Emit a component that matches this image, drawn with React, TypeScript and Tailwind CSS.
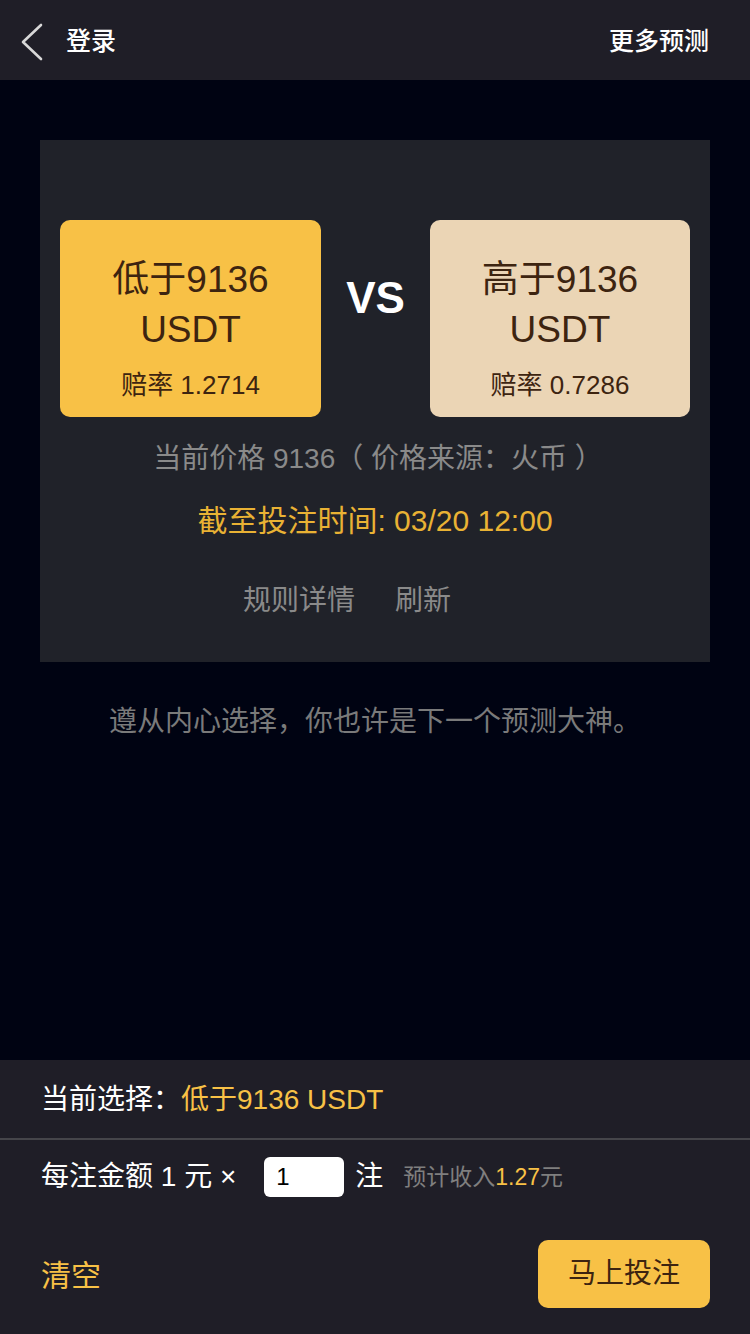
const font = { fontFamily: '"Liberation Sans", "Noto Sans CJK SC", sans-serif' };

function BackIcon() {
  return (
    <svg width="28" height="38" viewBox="0 0 28 38" fill="none">
      <polyline points="25,2 7,19 25,36" stroke="#d8d8d8" strokeWidth="2.6" strokeLinecap="round" strokeLinejoin="round" />
    </svg>
  );
}

export default function App() {
  return (
    <div className="flex flex-col w-[750px] h-[1334px] bg-[#000312] overflow-hidden" style={font}>
      <div className="flex h-[80px] items-center justify-between bg-[#1f1e27] pl-[16px] pr-[41px] pt-[3px] shrink-0">
        <div className="flex items-center gap-[22px]">
          <BackIcon />
          <span className="text-[25px] font-medium text-white">登录</span>
        </div>
        <span className="text-[25px] font-medium text-white">更多预测</span>
      </div>

      <div className="flex-1 flex flex-col items-center pt-[60px]">
        <div className="w-[670px] h-[522px] bg-[#202229] flex flex-col items-center pt-[80px]">
          <div className="flex w-full px-5 items-center justify-between">
            <div className="w-[261px] h-[197px] rounded-[10px] bg-[#f8c146] flex flex-col items-center justify-center pt-[22px] text-[#3d2410]">
              <span className="text-[37px] leading-[50px]">低于9136</span>
              <span className="text-[37px] leading-[50px]">USDT</span>
              <span className="text-[26px] leading-[40px] mt-[10px]">赔率 1.2714</span>
            </div>
            <span className="text-[44px] font-bold text-white mb-[42px]">VS</span>
            <div className="w-[260px] h-[197px] rounded-[10px] bg-[#ebd5b5] flex flex-col items-center justify-center pt-[22px] text-[#3d2410]">
              <span className="text-[37px] leading-[50px]">高于9136</span>
              <span className="text-[37px] leading-[50px]">USDT</span>
              <span className="text-[26px] leading-[40px] mt-[10px]">赔率 0.7286</span>
            </div>
          </div>
          <p className="mt-[22px] text-[28px] leading-[40px] text-[#8a8a8a] pl-[6px]">当前价格 9136（ 价格来源：火币 ）</p>
          <p className="mt-[22px] text-[30px] leading-[40px] text-[#e9b234]">截至投注时间: 03/20 12:00</p>
          <div className="mt-[40px] flex gap-[40px] text-[28px] leading-[40px] text-[#8a8a8a] -ml-[56px]">
            <span>规则详情</span>
            <span>刷新</span>
          </div>
        </div>
        <p className="mt-[40px] text-[28px] leading-[40px] text-[#7a7a7a]">遵从内心选择，你也许是下一个预测大神。</p>
      </div>

      <div className="h-[274px] bg-[#1f1e27] flex flex-col shrink-0">
        <div className="h-[80px] flex items-center px-[41px] pt-[2px] text-[28px] border-b-2 border-[#45454a]">
          <span className="text-white">当前选择：</span>
          <span className="text-[#f8c146]">低于9136 USDT</span>
        </div>
        <div className="flex items-center h-[74px] px-[41px]">
          <span className="text-[28px] text-white">每注金额 1 元 ×</span>
          <div className="ml-[28px] w-[80px] h-[40px] rounded-[6px] bg-white flex items-center pl-[12px] text-[24px] text-black">1</div>
          <span className="ml-[11px] text-[28px] text-white">注</span>
          <span className="ml-[20px] text-[23px] text-[#7f7f7f]">
            预计收入<span className="text-[#f8c146]">1.27</span>元
          </span>
        </div>
        <div className="flex items-center justify-between px-[40px] mt-[26px]">
          <span className="text-[30px] text-[#f8c146] ml-[1px] pt-[3px]">清空</span>
          <button className="w-[172px] h-[68px] rounded-[10px] bg-[#f8c146] text-[28px] text-[#3d2410]">马上投注</button>
        </div>
      </div>
    </div>
  );
}
